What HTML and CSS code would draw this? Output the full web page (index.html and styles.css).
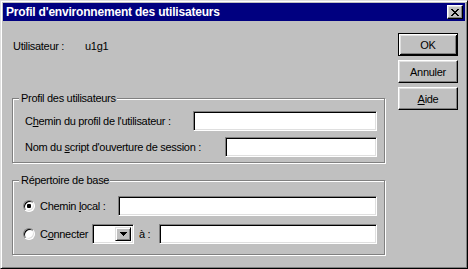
FILE: index.html
```html
<!DOCTYPE html>
<html lang="fr">
<head>
    <meta charset="UTF-8">
    <title>Profil d'environnement des utilisateurs</title>
    <link rel="stylesheet" href="styles.css">
</head>
<body>

    <div class="window">
        <!-- Title bar -->
        <div class="titlebar">
            <span class="title">Profil d'environnement des utilisateurs</span>
            <button class="close-btn" type="button">
                <svg width="8" height="7" viewBox="0 0 8 7" shape-rendering="crispEdges">
                    <path d="M0 0h2v1H0zM6 0h2v1H6zM1 1h2v1H1zM5 1h2v1H5zM2 2h4v1H2zM3 3h2v1H3zM2 4h4v1H2zM1 5h2v1H1zM5 5h2v1H5zM0 6h2v1H0zM6 6h2v1H6z" fill="#000"/>
                </svg>
            </button>
        </div>

        <div class="dialog-body">
            <div class="main-col">
                <div class="user-row">
                    <span class="user-label">Utilisateur :</span>
                    <span>u1g1</span>
                </div>

                <!-- Profil des utilisateurs -->
                <div class="group group-profile">
                    <span class="group-title">Profil des utilisateurs</span>
                    <div class="field-row">
                        <span class="label label-profile">C<u>h</u>emin du profil de l'utilisateur :</span>
                        <input type="text" class="edit">
                    </div>
                    <div class="field-row">
                        <span class="label label-script">Nom du <u>s</u>cript d'ouverture de session :</span>
                        <input type="text" class="edit">
                    </div>
                </div>

                <!-- Repertoire de base -->
                <div class="group group-home">
                    <span class="group-title">Répertoire de base</span>
                    <div class="field-row">
                        <span class="radio checked"></span>
                        <span class="label label-local">Chemin <u>l</u>ocal :</span>
                        <input type="text" class="edit">
                    </div>
                    <div class="field-row">
                        <span class="radio"></span>
                        <span class="label label-connect">C<u>o</u>nnecter</span>
                        <div class="combo">
                            <span class="combo-field"></span>
                            <span class="combo-btn">
                                <svg width="7" height="4" viewBox="0 0 7 4" shape-rendering="crispEdges">
                                    <path d="M0 0h7v1H0zM1 1h5v1H1zM2 2h3v1H2zM3 3h1v1H3z" fill="#000"/>
                                </svg>
                            </span>
                        </div>
                        <span class="label label-to">à :</span>
                        <input type="text" class="edit">
                    </div>
                </div>
            </div>

            <div class="button-col">
                <button type="button" class="btn default">OK</button>
                <button type="button" class="btn">Annuler</button>
                <button type="button" class="btn"><u>A</u>ide</button>
            </div>
        </div>
    </div>

</body>
</html>
```

FILE: styles.css
```css
body {
    margin: 0;
    padding: 0;
    font-family: "Liberation Sans", Arial, sans-serif;
    font-size: 11px;
    letter-spacing: -0.3px;
    color: #000;
    background: #c0c0c0;
}
u {
    text-decoration-thickness: 1px;
    text-underline-offset: 1px;
}
.window {
    width: 468px;
    height: 269px;
    box-sizing: border-box;
    display: flex;
    flex-direction: column;
    padding: 2px;
    background: #c0c0c0;
    border: 1px solid;
    border-color: #dfdfdf #000 #000 #dfdfdf;
    box-shadow: inset 1px 1px #fff, inset -1px -1px #808080;
}
/* Title bar */
.titlebar {
    height: 18px;
    flex-shrink: 0;
    display: flex;
    align-items: center;
    justify-content: space-between;
    padding: 0 2px 0 3px;
    background: #000080;
}
.title {
    color: #fff;
    font-weight: bold;
    font-size: 12px;
    letter-spacing: -0.2px;
    line-height: 14px;
}
.close-btn {
    width: 16px;
    height: 14px;
    padding: 0;
    display: flex;
    align-items: center;
    justify-content: center;
    background: #c0c0c0;
    border: 1px solid;
    border-color: #fff #000 #000 #fff;
    box-shadow: inset -1px -1px #808080, inset 1px 1px #dfdfdf;
}
.close-btn svg {
    display: block;
    margin: 0 1px 0 0;
}
/* Body */
.dialog-body {
    flex: 1;
    display: flex;
}
.main-col {
    width: 373px;
    margin-left: 9px;
    display: flex;
    flex-direction: column;
}
.user-row {
    margin-top: 19px;
    padding-left: 1px;
    display: flex;
    line-height: 13px;
}
.user-label {
    width: 72px;
}
/* Group boxes */
.group {
    display: flex;
    flex-direction: column;
    border: 1px solid #808080;
    box-shadow: inset 1px 1px #fff, 1px 1px #fff;
    padding: 0 7px 0 0;
}
.group-profile {
    margin-top: 45px;
    height: 65px;
    box-sizing: border-box;
}
.group-home {
    margin-top: 17px;
    height: 75px;
    box-sizing: border-box;
}
.group-title {
    align-self: flex-start;
    margin: -7px 0 0 6px;
    padding: 0 1px 0 2px;
    line-height: 13px;
    background: #c0c0c0;
}
.field-row {
    display: flex;
    align-items: center;
    height: 20px;
    margin-top: 6px;
}
.group-home .field-row {
    margin-top: 8px;
}
.group-home .field-row:first-of-type {
    margin-top: 9px;
}
.label {
    flex-shrink: 0;
    line-height: 13px;
    white-space: nowrap;
}
.label-profile {
    width: 168px;
    padding-left: 12px;
}
.label-script {
    width: 200px;
    padding-left: 12px;
}
.label-local {
    width: 78px;
}
.label-connect {
    width: 52px;
}
.label-to {
    width: 20px;
    margin-left: 5px;
}
/* Sunken edit box */
.edit {
    flex: 1;
    min-width: 0;
    height: 20px;
    box-sizing: border-box;
    margin: 0;
    padding: 0;
    background: #fff;
    border: 1px solid;
    border-color: #808080 #fff #fff #808080;
    box-shadow: inset 1px 1px #000, inset -1px -1px #dfdfdf;
    outline: none;
}
/* Radio buttons */
.radio {
    flex-shrink: 0;
    width: 12px;
    height: 12px;
    box-sizing: border-box;
    margin: 0 5px 0 10px;
    border-radius: 50%;
    background: #fff;
    border: 1px solid;
    border-color: #808080 #fff #fff #808080;
    box-shadow: inset 1px 1px #000, inset -1px -1px #dfdfdf;
    display: flex;
    align-items: center;
    justify-content: center;
}
.radio.checked::after {
    content: "";
    width: 4px;
    height: 4px;
    border-radius: 1px;
    background: #000;
}
/* Combo box */
.combo {
    flex-shrink: 0;
    width: 42px;
    height: 20px;
    box-sizing: border-box;
    display: flex;
    padding: 2px;
    background: #fff;
    border: 1px solid;
    border-color: #808080 #fff #fff #808080;
    box-shadow: inset 1px 1px #000, inset -1px -1px #dfdfdf;
}
.combo-field {
    flex: 1;
}
.combo-btn {
    width: 16px;
    box-sizing: border-box;
    display: flex;
    align-items: center;
    justify-content: center;
    background: #c0c0c0;
    border: 1px solid;
    border-color: #dfdfdf #000 #000 #dfdfdf;
    box-shadow: inset 1px 1px #fff, inset -1px -1px #808080;
}
/* Buttons */
.button-col {
    margin-left: 13px;
    display: flex;
    flex-direction: column;
    gap: 4px;
    padding-top: 12px;
}
.btn {
    width: 60px;
    height: 23px;
    padding: 0;
    font-family: inherit;
    font-size: 11px;
    letter-spacing: -0.3px;
    color: #000;
    background: #c0c0c0;
    border: 1px solid;
    border-color: #fff #000 #000 #fff;
    box-shadow: inset -1px -1px #808080, inset 1px 1px #dfdfdf;
}
.btn.default {
    border-color: #000;
    box-shadow: inset 1px 1px #fff, inset -1px -1px #000, inset 2px 2px #dfdfdf, inset -2px -2px #808080;
}
```
